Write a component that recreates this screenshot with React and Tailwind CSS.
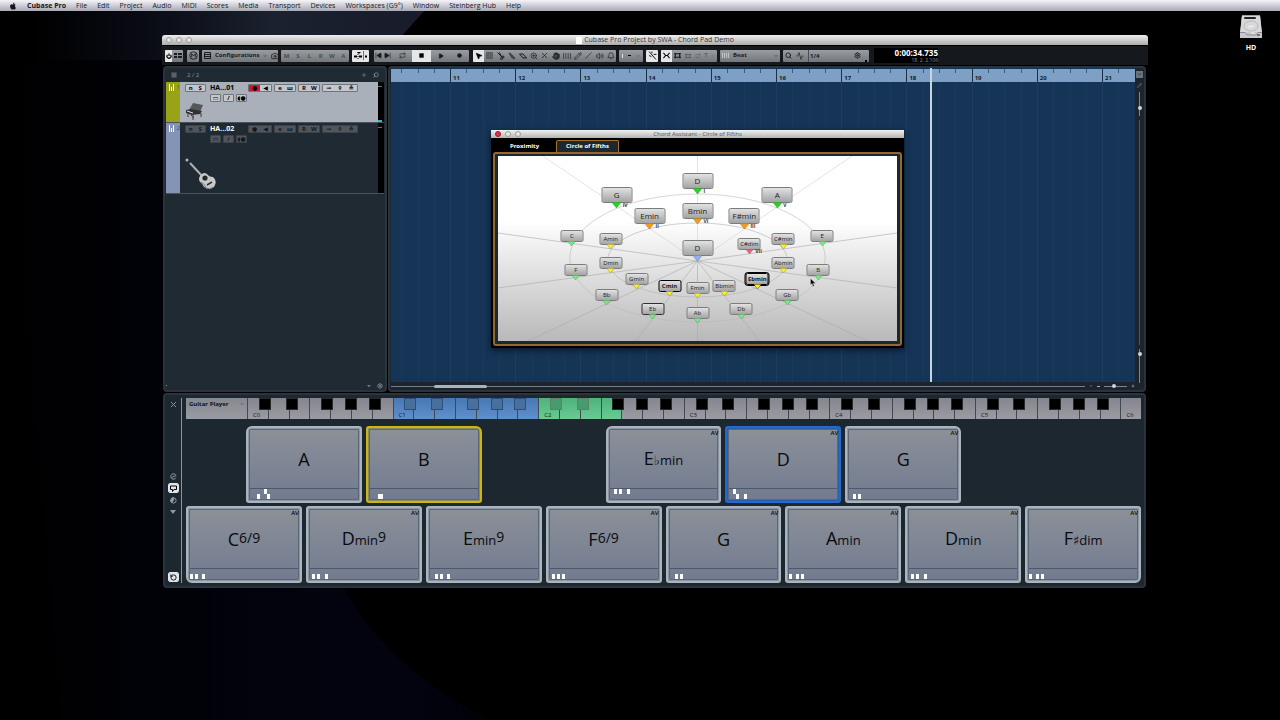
import { useState } from "react";
import clsx from "clsx";
import {
  Activity,
  Bell,
  Camera,
  ChevronDown,
  Circle,
  Gauge,
  Hand,
  Keyboard,
  MousePointer2,
  Pencil,
  Play,
  Plus,
  Repeat,
  RotateCcw,
  Search,
  Settings,
  Slash,
  SkipBack,
  SkipForward,
  Volume2,
  X,
  ZoomIn,
} from "lucide-react";
import { FaApple } from "react-icons/fa";

const MENU = [
  "File",
  "Edit",
  "Project",
  "Audio",
  "MIDI",
  "Scores",
  "Media",
  "Transport",
  "Devices",
  "Workspaces (G9°)",
  "Window",
  "Steinberg Hub",
  "Help",
];

const FULL_BARS = [11, 12, 13, 14, 15, 16, 17, 18, 19, 20];

// x / y are the centre of the label box on the 400 x 185 canvas
const CHORDS = [
  { name: "D", x: 200, y: 25, big: true, tip: "#14e014", degree: "I" },
  { name: "G", x: 119, y: 39, big: true, tip: "#14e014", degree: "IV" },
  { name: "A", x: 280, y: 39, big: true, tip: "#14e014", degree: "V" },
  { name: "Emin", x: 152, y: 60, big: true, tip: "#ff9a10", degree: "II" },
  { name: "Bmin", x: 200, y: 55, big: true, tip: "#ff9a10", degree: "VI" },
  { name: "F#min", x: 247, y: 60, big: true, tip: "#ff9a10", degree: "III" },
  { name: "D", x: 200, y: 92, big: true, tip: "#8fb0ff" },
  { name: "C", x: 74, y: 80, tip: "#6df080" },
  { name: "E", x: 325, y: 80, tip: "#6df080" },
  { name: "Amin", x: 113, y: 83, tip: "#fff01e" },
  { name: "C#min", x: 286, y: 83, tip: "#fff01e" },
  { name: "C#dim", x: 252, y: 88, tip: "#f0607a", degree: "VII" },
  { name: "Dmin", x: 113, y: 107, tip: "#fff01e" },
  { name: "Abmin", x: 286, y: 107, tip: "#fff01e" },
  { name: "F", x: 78, y: 114, tip: "#6df080" },
  { name: "B", x: 321, y: 114, tip: "#6df080" },
  { name: "Gmin", x: 139, y: 123, tip: "#fff01e" },
  { name: "Ebmin", x: 260, y: 123, tip: "#fff01e", ring: "strong" },
  { name: "Cmin", x: 172, y: 130, tip: "#fff01e", ring: "medium" },
  { name: "Bbmin", x: 227, y: 130, tip: "#fff01e" },
  { name: "Fmin", x: 200, y: 132, tip: "#fff01e" },
  { name: "Bb", x: 109, y: 139, tip: "#6df080" },
  { name: "Gb", x: 290, y: 139, tip: "#6df080" },
  { name: "Eb", x: 155, y: 153, tip: "#6df080", ring: "soft" },
  { name: "Db", x: 244, y: 153, tip: "#6df080" },
  { name: "Ab", x: 200, y: 157, tip: "#6df080" },
];

const RAYS = [
  [200, 0],
  [355, 0],
  [400, 77],
  [400, 132],
  [370, 185],
  [262, 185],
  [200, 185],
  [138, 185],
  [30, 185],
  [0, 132],
  [0, 77],
  [45, 0],
];

// notes are [x, row], row 0 is the upper octave
const TOP_PADS = [
  { root: "A", notes: [[7, 1], [14, 0], [17, 1]], corner: "rounded-tl-md" },
  { root: "B", notes: [[8, 1], [10, 1]], tone: "yellow", corner: "rounded-tr-md" },
  null,
  { root: "E", flat: true, kind: "min", notes: [[4, 0], [9, 0], [17, 0]], av: true, corner: "rounded-tl-md" },
  { root: "D", notes: [[4, 0], [7, 1], [15, 1]], av: true, tone: "blue" },
  { root: "G", notes: [[4, 1], [9, 1]], av: true, corner: "rounded-tr-md" },
  null,
];

const BOTTOM_PADS = [
  { root: "C", sup: "6/9", notes: [[0, 1], [5, 1], [12, 1]], av: true, corner: "rounded-bl-md" },
  { root: "D", kind: "min", sup: "9", notes: [[2, 1], [7, 1], [15, 1]], av: true },
  { root: "E", kind: "min", sup: "9", notes: [[5, 1], [10, 1], [17, 1]] },
  { root: "F", sup: "6/9", notes: [[2, 1], [7, 1], [12, 1]], av: true },
  { root: "G", notes: [[5, 1], [10, 1]], av: true },
  { root: "A", kind: "min", notes: [[0, 1], [7, 1], [12, 1]], av: true },
  { root: "D", kind: "min", notes: [[2, 1], [7, 1], [15, 1]], av: true },
  { root: "F", sharp: true, kind: "dim", notes: [[0, 1], [7, 1], [12, 1]], av: true, corner: "rounded-br-md" },
];

const BLACK_KEY_SIDE = {
  0: "-right-[3px]",
  1: "-right-[9px]",
  3: "-right-[3px]",
  4: "-right-[6px]",
  5: "-right-[9px]",
};

const Wallpaper = () => (
  <svg className="absolute inset-0 h-full w-full" viewBox="0 0 1280 720" preserveAspectRatio="none" aria-hidden="true">
    <defs>
      <linearGradient id="glow" x1="0" y1="0" x2="1" y2="0">
        <stop offset="0" stopColor="#0b0d18" stopOpacity="0" />
        <stop offset="0.3" stopColor="#0b0d18" stopOpacity="0.9" />
        <stop offset="0.6" stopColor="#1b212e" />
        <stop offset="1" stopColor="#181b2a" />
      </linearGradient>
      <linearGradient id="side" x1="0" y1="0" x2="1" y2="0">
        <stop offset="0" stopColor="#000" />
        <stop offset="0.35" stopColor="#010208" />
        <stop offset="0.8" stopColor="#02030f" />
        <stop offset="1" stopColor="#010108" />
      </linearGradient>
    </defs>
    <rect width="1280" height="720" fill="#000" />
    <path d="M0 60 L330 60 L345 590 Q390 670 490 720 L60 720 Z" fill="url(#side)" />
    <path d="M30 0 L434 0 L398 40 L300 60 L30 60 Z" fill="url(#glow)" />
  </svg>
);

const MenuBar = () => (
  <nav className="relative flex h-[11px] items-center gap-[10px] bg-linear-to-b from-[#f4f4f8] to-[#a9a9b6] pl-[9px] text-[7px] leading-[11px] text-[#16161a]">
    <button type="button" aria-label="Apple menu">
      <FaApple size={8} />
    </button>
    <button type="button" className="font-bold">Cubase Pro</button>
    {MENU.map((item) => (
      <button key={item} type="button" className="whitespace-nowrap">
        {item}
      </button>
    ))}
  </nav>
);

const HardDrive = () => (
  <div className="absolute top-[14px] right-[17px] flex w-6 flex-col items-center gap-1">
    <svg width="24" height="25" viewBox="0 0 24 25" aria-hidden="true">
      <path d="M3 1.5 H21 L23 18 V24 H1 V18 Z" fill="#c9c9cd" />
      <path d="M3 1.5 H21 L22.6 18 H1.4 Z" fill="#d8d8da" />
      <rect x="5" y="3" width="12" height="2" rx="1" fill="#222" />
      <ellipse cx="12" cy="12" rx="7" ry="5" fill="none" stroke="#b6b6bc" />
      <path d="M9 13 L15 12 M12 18 L16 20" stroke="#f4f4f4" />
      <path d="M1 18.5 H6 L8 21 H17 L19 18.5 H23" fill="none" stroke="#8c8c92" />
      <rect x="18" y="20" width="3" height="2" fill="#77777d" />
    </svg>
    <span className="text-[7px] leading-[9px] font-bold text-white">HD</span>
  </div>
);

const Lights = ({ active }) => (
  <div className="absolute left-1 flex gap-1">
    {["Close", "Minimize", "Zoom"].map((label, i) => (
      <button
        key={label}
        type="button"
        aria-label={label}
        className={clsx(
          "size-[6px] rounded-full border",
          active && i === 0 ? "border-[#9d1830] bg-[#e8304a]" : "border-[#9c9c9c] bg-[#e6e6e6]"
        )}
      />
    ))}
  </div>
);

const Group = ({ className, children }) => (
  <div
    className={clsx(
      "flex h-3 shrink-0 items-center justify-around overflow-hidden rounded-[1px] bg-linear-to-b from-[#9a9da1] to-[#73777b] text-[#1a1c1f]",
      className
    )}
  >
    {children}
  </div>
);

const Tool = ({ label, icon: Icon, size = 7, fill = "none", className }) => (
  <button type="button" aria-label={label} className={clsx("flex h-3 flex-1 items-center justify-center", className)}>
    <Icon size={size} fill={fill} strokeWidth={2} className="shrink-0" />
  </button>
);

const Lit = "bg-[#e4e6e8] text-black";

const SquareIcon = ({ size }) => (
  <svg width={size} height={size} viewBox="0 0 8 8">
    <rect x="1.5" y="1.5" width="5" height="5" fill="#000" />
  </svg>
);

const PanelsIcon = () => (
  <svg width="8" height="7" viewBox="0 0 8 7">
    <path d="M0 1 H3 V3 H0 Z M4 1 H8 V3 H4 Z M0 4 H3 V6 H0 Z M4 4 H8 V6 H4 Z" fill="currentColor" />
  </svg>
);

const PowerIcon = ({ size }) => (
  <svg width={size} height={size} viewBox="0 0 8 8" fill="none" stroke="#000" strokeWidth="1.6">
    <path d="M2 2.5 A2.7 2.7 0 1 0 6 2.5 M4 0.5 V4" />
  </svg>
);

const DelayIcon = ({ size }) => (
  <svg width={size} height={size} viewBox="0 0 10 10" fill="none" stroke="currentColor">
    <circle cx="5" cy="5" r="4.2" />
    <path d="M3 7 V3 L5 5.5 L7 3 V7" />
  </svg>
);

const WindowIcon = () => (
  <svg width="7" height="7" viewBox="0 0 7 7" fill="none" stroke="currentColor" className="shrink-0">
    <path d="M0.5 0.5 H6.5 V6.5 H0.5 Z M0.5 2.5 H6.5 M0.5 4.5 H6.5" />
  </svg>
);

const RangeIcon = ({ size }) => (
  <svg width={size} height={size} viewBox="0 0 8 8">
    <rect x="0.5" y="0.5" width="7" height="7" fill="#5e6266" stroke="#3c3e41" strokeDasharray="1 1" />
  </svg>
);

const ScissorsIcon = ({ size }) => (
  <svg width={size} height={size} viewBox="0 0 8 8" fill="none" stroke="currentColor">
    <path d="M0.5 0.5 L5 5 M2.5 0.5 L4.5 5" />
    <circle cx="6" cy="5" r="1" />
    <circle cx="4.5" cy="6.6" r="1" />
  </svg>
);

const GlueIcon = ({ size }) => (
  <svg width={size} height={size} viewBox="0 0 8 8">
    <path d="M0.5 1 L2 0.5 L7.5 6 L6 7.5 L3.5 6 Z" fill="#404346" />
  </svg>
);

const EraserIcon = ({ size }) => (
  <svg width={size} height={size} viewBox="0 0 8 8" fill="none" stroke="currentColor">
    <path d="M0.5 2 H4 L7.5 6 H4 Z" />
  </svg>
);

const BarsIcon = ({ size }) => (
  <svg width={size} height={size} viewBox="0 0 8 8" stroke="currentColor">
    <path d="M0.5 1 V7 M2.8 1 V7 M5.2 1 V7 M7.5 1 V7" opacity="0.6" />
  </svg>
);

const LinesIcon = ({ size }) => (
  <svg width={size} height={size} viewBox="0 0 8 8" stroke="currentColor" strokeWidth="1.4">
    <path d="M0 2 H8 M0 6 H8 M1.5 1 V7 M6.5 1 V7" />
  </svg>
);

const SnapIcon = ({ size }) => (
  <svg width={size} height={size} viewBox="0 0 8 8" fill="none" stroke="currentColor" strokeWidth="1.2">
    <path d="M0.5 1 L3 4 L0.5 7 M7.5 1 L5 4 L7.5 7 M3 4 H5" />
  </svg>
);

const CrossfadeIcon = ({ size }) => (
  <svg width={size} height={size} viewBox="0 0 8 8" fill="none" stroke="currentColor" strokeWidth="0.8">
    <path d="M1 0.5 L7 7.5 M3.5 0.5 V2 M1 4 L3 5 M5 3 H7.5" />
  </svg>
);

const AutoscrollIcon = () => (
  <svg width="15" height="9" viewBox="0 0 15 9" stroke="#000" fill="#000">
    <path d="M1 5.5 H4 M6 5.5 H9" strokeWidth="2" />
    <path d="M5 1 V8" strokeDasharray="1 1" />
    <path d="M4 1 L8 1 L6 3 Z" strokeWidth="0" />
    <path d="M10.5 0 V9" strokeWidth="0.5" />
    <rect x="12.5" y="5" width="1" height="1" />
  </svg>
);

const Toolbar = () => (
  <div className="flex h-5 items-center gap-[3px] overflow-hidden border-t border-black bg-[#15191d] pl-[3px] text-[6px] font-bold">
    <Group className="w-[18px]">
      <Tool label="Activate project" icon={PowerIcon} size={6} className={Lit} />
      <span className="flex w-[11px] justify-center"><PanelsIcon /></span>
    </Group>
    <Group className="ml-px w-3">
      <Tool label="Delay compensation" icon={DelayIcon} size={9} />
    </Group>
    <Group className="w-[76px] gap-1 px-[2px]">
      <WindowIcon />
      <button type="button" className="flex-1 whitespace-nowrap text-left">Configurations</button>
      <ChevronDown size={4} strokeWidth={3} className="shrink-0" />
      <Camera size={8} strokeWidth={2.5} className="shrink-0" />
    </Group>
    <Group className="w-[68px]">
      {["M", "S", "L", "R", "W", "A"].map((letter) => (
        <button key={letter} type="button" className="h-3 flex-1 leading-3 text-[#4a4e52]">{letter}</button>
      ))}
    </Group>
    <Group className="w-[17px] bg-[#e4e6e8] bg-none">
      <AutoscrollIcon />
    </Group>
    <Group className="ml-[2px] w-[95px] gap-px">
      <div className="flex w-[18px]">
        <Tool label="Previous" icon={SkipBack} fill="currentColor" />
        <Tool label="Next" icon={SkipForward} fill="currentColor" />
      </div>
      <Tool label="Cycle" icon={Repeat} />
      <Tool label="Stop" icon={SquareIcon} className={Lit} />
      <Tool label="Start" icon={Play} size={6} fill="currentColor" />
      <Tool label="Record" icon={Circle} size={5} fill="currentColor" />
    </Group>
    <Group className="ml-px w-[143px]">
      <Tool label="Object selection" icon={MousePointer2} size={8} fill="currentColor" className={Lit} />
      <Tool label="Range selection" icon={RangeIcon} />
      <Tool label="Split" icon={ScissorsIcon} size={8} />
      <Tool label="Glue" icon={GlueIcon} size={8} />
      <Tool label="Erase" icon={EraserIcon} size={8} />
      <Tool label="Zoom" icon={ZoomIn} size={8} />
      <Tool label="Mute" icon={X} size={9} />
      <Tool label="Comp" icon={Hand} size={8} fill="#333" />
      <Tool label="Time warp" icon={BarsIcon} size={8} />
      <Tool label="Draw" icon={Pencil} size={8} />
      <Tool label="Line" icon={Slash} />
      <Tool label="Play" icon={Volume2} size={8} />
      <Tool label="Color" icon={Bell} size={8} />
    </Group>
    <Group className="w-6">
      <span className="h-1 w-px bg-[#dfe2e4]" />
      <span className="h-px w-[3px] bg-black" />
      <ChevronDown size={4} />
    </Group>
    <Group className="w-3">
      <Tool label="Auto crossfade" icon={CrossfadeIcon} size={9} className={Lit} />
    </Group>
    <Group className="w-14">
      <Tool label="Snap" icon={SnapIcon} className={Lit} />
      <Tool label="Snap type" icon={LinesIcon} />
      <span className="flex flex-3 items-center justify-around text-[#5c6064]">
        <LinesIcon size={6} />
        <Repeat size={6} />
        <span>T</span>
        <ChevronDown size={4} />
      </span>
    </Group>
    <Group className="w-[60px] gap-1 px-[2px]">
      <span className="flex text-white"><BarsIcon size={7} /></span>
      <button type="button" className="flex-1 text-left">Beat</button>
      <ChevronDown size={4} strokeWidth={3} />
    </Group>
    <Group className="w-[86px] gap-1 px-[2px]">
      <Search size={7} strokeWidth={3} />
      <Activity size={8} />
      <button type="button" className="h-3 flex-1 border-l border-[#4c5054] pl-px text-left leading-3">1/4</button>
      <Settings size={7} strokeWidth={3} />
      <span className="size-[2px] self-end bg-black" />
    </Group>
    <div className="ml-[2px] flex w-16 shrink-0 flex-col items-end bg-black text-white">
      <span className="text-[8px] leading-[9px]">0:00:34.735</span>
      <span className="text-[5px] leading-[6px] font-normal text-[#9a9a9a]">18. 2. 2.106</span>
    </div>
  </div>
);

const Piano = () => (
  <svg width="20" height="19" viewBox="0 0 20 19" aria-hidden="true">
    <path d="M4 8 L8 1 L18 3 L15 10 Z" fill="#55585a" />
    <path d="M1 8 L6 7 L17 9 L15 12 L7 13 L1 11 Z" fill="#303234" />
    <path d="M2 9 L8 11" stroke="#d8dadc" />
    <path d="M3 11 V15 M8 13 V18 M16 11 V15 M6 13 L9 16" stroke="#3b3d40" />
  </svg>
);

const Guitar = () => (
  <svg width="32" height="34" viewBox="0 0 32 34" aria-hidden="true">
    <path d="M5 6 L18 20" stroke="#aeb0b2" strokeWidth="2" fill="none" />
    <circle cx="2" cy="3" r="1.5" fill="#b6b6b6" />
    <path d="M15 19 Q18 14 22 17 Q24 20 28 20 Q33 24 29 30 Q24 34 19 30 Q17 26 15 25 Q13 22 15 19 Z" fill="#c8c9ca" />
    <circle cx="20" cy="21" r="2.6" fill="#25282a" />
    <path d="M22 28 L27 25" stroke="#303234" strokeWidth="1.5" />
    <path d="M16 25 Q20 27 21 31 Q25 33 28 30" stroke="#77797b" fill="none" />
  </svg>
);

const TrackButtons = ({ lit, labels, className }) => (
  <div
    className={clsx(
      "flex h-2 items-center overflow-hidden rounded-[1px] border",
      lit ? "border-[#6e747a] bg-[#c3c7cd] text-black" : "border-[#3c4349] bg-[#50565c] text-[#14181c]",
      className
    )}
  >
    {labels.map(([glyph, label, tone]) => (
      <button
        key={label}
        type="button"
        aria-label={label}
        className={clsx("flex h-2 flex-1 items-center justify-center text-[6px] leading-2 font-bold", tone)}
      >
        {glyph}
      </button>
    ))}
  </div>
);

const Track = ({ number, name, lit, strip, height, children }) => (
  <li className={clsx("flex border-b border-[#4a5258]", height, lit ? "bg-[#a9b0b9]" : "bg-[#1f2a33]")}>
    <div className={clsx("flex w-[14px] items-start gap-[2px] pt-[2px] pl-[2px] text-[5px] leading-[6px]", strip)}>
      <svg width="7" height="7" viewBox="0 0 7 7" fill="none" stroke="#fff" className="shrink-0">
        <path d="M1.5 0 V7 M3.5 3 V7 M5.5 0 V7" />
      </svg>
      <span>{number}</span>
    </div>
    <div className="flex min-w-0 flex-1 flex-col pt-[2px] pl-[5px]">
      <div className="flex items-center">
        <TrackButtons lit={lit} className="w-[21px]" labels={[["n", "Mute"], ["S", "Solo"]]} />
        <span className={clsx("w-[42px] pl-1 text-[7px] leading-2 font-bold", lit ? "text-black" : "text-white")}>
          {name}
        </span>
        <div className="flex gap-[2px]">
          <TrackButtons
            lit={lit}
            className="w-6"
            labels={[["●", "Record enable", lit && "bg-[#cc1838]"], ["◀", "Monitor"]]}
          />
          <TrackButtons lit={lit} className="w-[22px]" labels={[["e", "Edit channel"], ["ш", "Instrument"]]} />
          <TrackButtons lit={lit} className="w-[22px]" labels={[["R", "Read"], ["W", "Write"]]} />
          <TrackButtons lit={lit} className="w-9" labels={[["⊸", "Inserts"], ["◊", "Lock"], ["≗", "Lanes"]]} />
        </div>
      </div>
      <div className="mt-[2px] flex gap-[2px] pl-[25px]">
        <TrackButtons lit={lit} className="w-[11px]" labels={[["▭", "Preset"]]} />
        <TrackButtons lit={lit} className="w-[11px]" labels={[["/", "Drum map"]]} />
        <TrackButtons lit={lit} className="w-[11px]" labels={[["◖●", "Freeze"]]} />
      </div>
      {children}
    </div>
    <div className="flex w-[6px] flex-col justify-between bg-black pt-1">
      <span className="h-px w-1 bg-[#707070]" />
      {lit && <span className="h-[2px] w-1 bg-[#20c0d0]" />}
    </div>
  </li>
);

const TrackList = () => (
  <section className="flex w-56 shrink-0 flex-col rounded-sm border-2 border-[#2b343c] bg-[#1f2a33] px-px">
    <header className="flex h-[14px] items-center gap-[10px] px-[5px] text-[6px] text-[#8a949c]">
      <RangeIcon size={6} />
      <span className="flex-1">2 / 2</span>
      <button type="button" aria-label="Add track" className="-mr-1"><Plus size={6} /></button>
      <button type="button" aria-label="Find track"><Search size={6} strokeWidth={3} className="-scale-x-100" /></button>
    </header>
    <ul>
      <Track number={1} name="HA...01" lit strip="bg-[#98a316] text-[#4d5308]" height="h-[41px]">
        <div className="flex">
          <Piano />
        </div>
      </Track>
      <Track number={2} name="HA...02" strip="bg-[#8494b4] text-[#39435a]" height="h-[71px]">
        <div className="mt-[14px] flex">
          <Guitar />
        </div>
      </Track>
    </ul>
    <footer className="mt-auto flex h-[9px] items-center gap-[5px] pr-px text-[#8a949c]">
      <span className="mr-auto size-px bg-[#8a949c]" />
      <ChevronDown size={6} fill="currentColor" />
      <Settings size={6} strokeWidth={3} />
    </footer>
  </section>
);

const BarLine = ({ ruler, label, className }) => (
  <div
    className={clsx(
      "relative flex justify-end overflow-hidden",
      ruler ? "border-[#1c3048]" : "border-[#1d3d62]",
      className
    )}
  >
    {ruler && (
      <span className="absolute bottom-0 left-[2px] text-[6px] leading-2 font-bold text-[#13202e]">{label}</span>
    )}
    <div className={clsx("flex w-16 shrink-0", ruler && "h-1")}>
      <span className="flex-1" />
      {[2, 3, 4].map((beat) => (
        <span key={beat} className={clsx("flex-1 border-l", ruler ? "border-[#3d5c7c]" : "border-[#183a5e]")} />
      ))}
    </div>
  </div>
);

const BarGrid = ({ ruler, className }) => (
  <div className={clsx("flex", className)}>
    <BarLine ruler={ruler} className="w-[59px]" />
    {FULL_BARS.map((bar) => (
      <BarLine key={bar} ruler={ruler} label={bar} className="flex-1 border-l" />
    ))}
    <div className={clsx("relative flex w-[33px] border-l", ruler ? "border-[#1c3048]" : "border-[#1d3d62]")}>
      {ruler && (
        <span className="absolute bottom-0 left-[2px] text-[6px] leading-2 font-bold text-[#13202e]">21</span>
      )}
      <span className={clsx("w-4 border-r", ruler ? "h-1 border-[#3d5c7c]" : "border-[#183a5e]")} />
    </div>
  </div>
);

const Slider = ({ label, vertical, value, className }) => (
  <input
    type="range"
    aria-label={label}
    defaultValue={value}
    className={clsx(
      "block min-w-0 appearance-none bg-[#7d868e] [&::-webkit-slider-thumb]:size-1 [&::-webkit-slider-thumb]:appearance-none [&::-webkit-slider-thumb]:rounded-full [&::-webkit-slider-thumb]:bg-[#cdd4da]",
      vertical ? "w-px [writing-mode:vertical-lr]" : "h-px",
      className
    )}
  />
);

const ChordNode = ({ chord }) => (
  <div
    className="absolute flex -translate-x-1/2 flex-col items-center"
    style={{ left: `${chord.x / 4}%`, top: chord.y - (chord.big ? 8 : 6) }}
  >
    <button
      type="button"
      className={clsx(
        "flex items-center justify-center rounded-[2px] border bg-linear-to-b from-[#e2e2e2] to-[#a4a4a4] text-[#222]",
        chord.big ? "h-4 w-[31px] text-[8px]" : "h-3 w-[23px] text-[6px]",
        chord.ring === "strong" && "border-black font-bold outline outline-black",
        chord.ring === "medium" && "border-black font-bold",
        chord.ring === "soft" && "border-[#303030]",
        !chord.ring && "border-[#7c7c7c]"
      )}
    >
      {chord.name}
    </button>
    <svg
      className="relative -mt-px shrink-0"
      width={chord.big ? 10 : 8}
      height={chord.big ? 6 : 5}
      viewBox="0 0 10 5"
      preserveAspectRatio="none"
      aria-hidden="true"
    >
      <path d="M0.3 0.2 H9.7 L5 5 Z" fill={chord.tip} stroke={chord.ring === "strong" ? "#000" : "#5d6d50"} strokeWidth="0.4" />
    </svg>
    {chord.degree && (
      <span className="absolute top-full left-1/2 -mt-[6px] ml-[6px] text-[5px] leading-[7px] font-bold text-[#333]">
        {chord.degree}
      </span>
    )}
  </div>
);

const ChordAssistant = () => {
  const [tab, setTab] = useState("Circle of Fifths");

  return (
    <section className="absolute top-[62px] left-[100px] w-[413px] bg-black shadow-[0_2px_6px_rgba(0,0,0,0.6)]">
      <header className="relative flex h-2 items-center justify-center bg-linear-to-b from-[#f2f2f2] to-[#b4b4b4] text-[6px] leading-2 text-[#555]">
        <Lights active />
        Chord Assistant - Circle of Fifths
      </header>
      <div className="flex h-[14px] items-end pl-[2px] text-[6px] font-bold text-white" role="tablist">
        {["Proximity", "Circle of Fifths"].map((name) => (
          <button
            key={name}
            type="button"
            role="tab"
            aria-selected={tab === name}
            onClick={() => setTab(name)}
            className={clsx(
              "h-3 w-[63px] rounded-t-[2px]",
              tab === name ? "border border-b-0 border-[#a5742c] bg-[#1c2730]" : "border-transparent"
            )}
          >
            {name}
          </button>
        ))}
      </div>
      <div className="mx-[2px] rounded-[3px] border-2 border-[#94692b] bg-[#1c2730] px-[3px] pt-[2px] pb-[3px]">
        <div className="relative h-[185px] bg-linear-to-b from-white from-35% to-[#b9b9b9]">
          <svg className="absolute inset-0 h-full w-full" viewBox="0 0 400 185" preserveAspectRatio="none" fill="none" aria-hidden="true">
            {RAYS.map(([x, y]) => (
              <path key={`${x}-${y}`} d={`M200 105 L${x} ${y}`} stroke={y === 0 ? "#d0d0d0" : "#a9a9a9"} strokeWidth="0.6" />
            ))}
            <ellipse cx="200" cy="102" rx="128" ry="64" stroke="#b8b8b8" strokeWidth="0.6" />
            <ellipse cx="200" cy="104" rx="90" ry="37" stroke="#b0b0b0" strokeWidth="0.6" />
          </svg>
          {CHORDS.map((chord) => (
            <ChordNode key={`${chord.name}-${chord.x}-${chord.y}`} chord={chord} />
          ))}
          <svg className="absolute top-[122px] left-[312px]" width="6" height="9" viewBox="0 0 6 9" aria-hidden="true">
            <path d="M0.5 0.5 V7 L2 5.5 L3 8.5 L4.2 8 L3.2 5.2 H5.5 Z" fill="#000" stroke="#ddd" strokeWidth="0.4" />
          </svg>
        </div>
      </div>
      <div className="h-[2px]" />
    </section>
  );
};

const Arrangement = () => (
  <section className="flex min-w-0 flex-1 rounded-sm border-2 border-[#2b343c] bg-[#1c252d] pl-px">
    <div className="flex min-w-0 flex-1 flex-col">
      <div className="relative flex flex-1 flex-col bg-[#153456] pt-px">
        <BarGrid ruler className="h-[13px] bg-[#7da0c4]" />
        <BarGrid className="flex-1" />
        <div className="absolute inset-y-0 left-[539px] w-[2px] bg-[#c8d4de]" />
        <ChordAssistant />
      </div>
      <div className="flex h-2 items-center gap-1">
        <div className="flex h-px flex-1 items-center bg-[#77818a]">
          <span className="ml-[43px] h-[3px] w-[53px] shrink-0 rounded-full bg-[#aab3bb]" />
        </div>
        <ChevronDown size={4} className="text-white" />
        <span className="h-px w-[3px] bg-[#aab3bb]" />
        <Slider label="Horizontal zoom" value={40} className="w-[23px]" />
        <Plus size={4} className="text-white" />
      </div>
    </div>
    <div className="flex w-[9px] shrink-0 flex-col items-center gap-1 py-[3px] text-[#8f99a2]">
      <span className="flex size-[7px] items-center justify-center bg-[#6b747c] text-black"><ChevronDown size={5} /></span>
      <Pencil size={5} className="mt-px" />
      <Slider label="Track zoom" vertical value={70} className="h-6" />
      <span className="w-px flex-1 bg-[#4b545c]" />
      <Slider label="Waveform zoom" vertical value={10} className="mb-1 h-[34px]" />
    </div>
  </section>
);

const PianoKeyboard = () => {
  const keys = Array.from({ length: 43 }, (_, i) => ({
    octave: Math.floor(i / 7),
    step: i % 7,
    zone: i >= 7 && i < 14 ? "blue" : i >= 14 && i < 18 ? "green" : "gray",
  }));

  return (
    <div className="flex flex-1">
      {keys.map(({ octave, step, zone }) => (
        <div
          key={`${octave}-${step}`}
          className={clsx(
            "relative flex min-w-0 flex-1 items-end border-l border-[#43474f] pl-[5px]",
            zone === "gray" && "bg-linear-to-b from-[#85858f] to-[#9b9ba3]",
            zone === "blue" && "bg-linear-to-b from-[#4878b4] to-[#5f90cd]",
            zone === "green" && "bg-linear-to-b from-[#4eb27c] to-[#68cb93]"
          )}
        >
          {step === 0 && <span className="text-[6px] leading-[7px] text-[#15181c]">C{octave}</span>}
          {BLACK_KEY_SIDE[step] && octave < 6 && (
            <span
              className={clsx(
                "absolute top-0 z-10 h-3 w-3 border",
                BLACK_KEY_SIDE[step],
                zone === "gray" && "border-[#2a2a2a] bg-black",
                zone === "blue" && "border-[#2c4f7c] bg-[#47709f]",
                zone === "green" && step < 3 && "border-[#5a8463] bg-[#4a9a70]",
                zone === "green" && step === 3 && "border-[#2a2a2a] bg-black"
              )}
            />
          )}
        </div>
      ))}
    </div>
  );
};

const ChordPad = ({ pad }) => (
  <button
    type="button"
    className={clsx(
      "relative rounded-[3px] border-2 p-px text-[#0a0a0c]",
      pad.corner,
      !pad.tone && "border-[#a9b4be] bg-[#8a93a0]",
      pad.tone === "yellow" && "border-[#cdb60e] bg-[#8a8a60]",
      pad.tone === "blue" && "border-[#1f6bd0] bg-[#2a5fa8]"
    )}
  >
    <span className="flex h-full flex-col rounded-[1px] border border-[#5e6776] bg-linear-to-b from-[#8b9098] to-[#727b90]">
      <span className="flex flex-1 items-center justify-center">
        <span className="text-[18px] leading-6">
          {pad.root}
          {pad.flat && <span className="text-[13px]">♭</span>}
          {pad.sharp && <span className="text-[13px]">♯</span>}
          {pad.kind && <span className="text-[13px]">{pad.kind}</span>}
          {pad.sup && <span className="align-[3px] text-[14px] leading-4">{pad.sup}</span>}
        </span>
      </span>
      <span className="relative h-[11px] border-t border-[#4e586a]">
        {pad.notes.map(([x, row]) => (
          <span
            key={x}
            className={clsx("absolute h-[5px] w-[3px] bg-white", row === 0 ? "top-0" : "top-[5px]")}
            style={{ left: x }}
          />
        ))}
      </span>
    </span>
    {pad.av && <span className="absolute top-[1px] right-px text-[6px] leading-2 font-semibold">AV</span>}
  </button>
);

const PadRow = ({ pads, className }) => (
  <div className={clsx("grid h-[77px] gap-1", className)}>
    {pads.map((pad, i) => (pad ? <ChordPad key={i} pad={pad} /> : <span key={i} />))}
  </div>
);

const RailButton = ({ label, lit, className, children }) => (
  <button
    type="button"
    aria-label={label}
    className={clsx(
      "flex h-2 shrink-0 items-center justify-center",
      lit && "w-[9px] rounded-[1px] bg-[#e0e6ea] text-black outline outline-[#e0e6ea]",
      className
    )}
  >
    {children}
  </button>
);

const ChordPads = () => (
  <section className="flex rounded-sm border-2 border-[#2b343c] bg-[#1d272f] pt-[3px] pb-[3px] text-[#8f99a2]">
    <aside className="mr-1 flex w-[17px] shrink-0 flex-col items-center gap-1 border-r border-[#8a949c] pt-[2px] pb-px">
      <RailButton label="Close"><X size={9} strokeWidth={2.5} /></RailButton>
      <RailButton label="Edit pads" className="mt-[60px]">
        <svg width="7" height="7" viewBox="0 0 7 7" fill="none" stroke="currentColor">
          <path d="M6 4.5 A2.7 2.7 0 1 1 6 2.5 L1.5 4.5" />
        </svg>
      </RailButton>
      <RailButton label="Chord assistant" lit>
        <svg width="7" height="7" viewBox="0 0 7 7" fill="none" stroke="currentColor">
          <path d="M0.5 1 H6.5 V4.5 H4 L2.5 6.5 V4.5 H0.5 Z" />
        </svg>
      </RailButton>
      <RailButton label="Player setup">
        <svg width="7" height="7" viewBox="0 0 7 7" fill="none" stroke="currentColor">
          <circle cx="3.5" cy="3.5" r="2.6" />
          <path d="M3.5 0.5 V3.5 L1.5 5.5 A3 3 0 0 1 3.5 0.5 Z" fill="currentColor" />
        </svg>
      </RailButton>
      <RailButton label="Functions">
        <svg width="6" height="4" viewBox="0 0 6 4">
          <path d="M0 0 H6 L3 4 Z" fill="currentColor" />
        </svg>
      </RailButton>
      <RailButton label="Reset" lit className="mt-auto mb-px">
        <RotateCcw size={7} strokeWidth={3} />
      </RailButton>
    </aside>
    <div className="flex min-w-0 flex-1 flex-col pr-[3px]">
      <div className="flex h-[21px]">
        <button type="button" className="flex w-[61px] items-start justify-between bg-linear-to-b from-[#85888e] to-[#989ba2] px-[3px] pt-[2px] text-[6px] leading-2 font-bold text-[#101214]">
          Guitar Player
          <ChevronDown size={4} className="mt-[2px]" />
        </button>
        <PianoKeyboard />
      </div>
      <PadRow pads={TOP_PADS} className="mt-[7px] grid-cols-7 px-[60px]" />
      <PadRow pads={BOTTOM_PADS} className="mt-[3px] grid-cols-8" />
    </div>
  </section>
);

const ProjectWindow = () => (
  <div className="absolute top-[35px] right-[132px] left-[162px]">
    <header className="relative flex h-[10px] items-center justify-center gap-[2px] rounded-t-[3px] bg-linear-to-b from-[#efefef] to-[#adadad] text-[7px] leading-[10px] text-[#333]">
      <Lights />
      <span className="h-[7px] w-[6px] bg-white" />
      Cubase Pro Project by SWA - Chord Pad Demo
    </header>
    <Toolbar />
    <div className="mr-[2px] ml-px flex flex-col gap-px bg-black pt-px">
      <div className="flex h-[326px] gap-px">
        <TrackList />
        <Arrangement />
      </div>
      <ChordPads />
    </div>
  </div>
);

const App = () => (
  <div className="relative min-h-screen overflow-hidden bg-black font-['Open_Sans','DejaVu_Sans',sans-serif]">
    <Wallpaper />
    <MenuBar />
    <HardDrive />
    <ProjectWindow />
  </div>
);

export default App;
